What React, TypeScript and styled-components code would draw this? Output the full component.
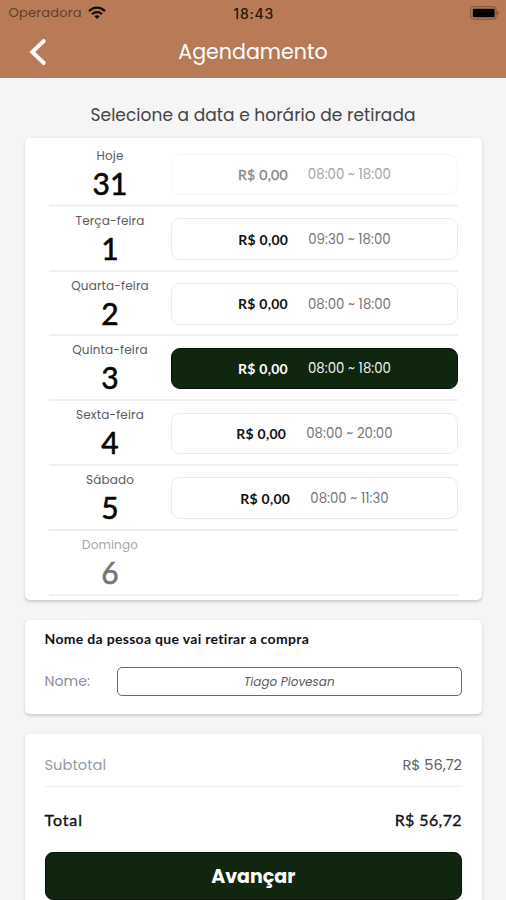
import React from "react";
import styled, { createGlobalStyle, css } from "styled-components";

const GlobalStyle = createGlobalStyle`
  *, *::before, *::after { box-sizing: border-box; }
  html, body { margin: 0; padding: 0; }
  body { background: #f5f5f5; overflow: hidden; }
`;

const geometric = `Poppins, Inter, "Open Sans", sans-serif`;
const humanist = `Lato, "Open Sans", sans-serif`;

type TextProps = {
  $size: number;
  $weight?: number;
  $track?: number;
  $color?: string;
  $thicken?: number;
};

const textStyle = css<TextProps>`
  font-size: ${(p) => p.$size}px;
  font-weight: ${(p) => p.$weight ?? 400};
  letter-spacing: ${(p) => p.$track ?? 0}px;
  color: ${(p) => p.$color ?? "#111"};
  -webkit-text-stroke: ${(p) => p.$thicken ?? 0}px currentColor;
  white-space: nowrap;
`;

const Geo = styled.span<TextProps>`
  font-family: ${geometric};
  ${textStyle}
`;

const Hum = styled.span<TextProps>`
  font-family: ${humanist};
  ${textStyle}
`;

const Clock = styled.span<TextProps>`
  font-family: Inter, "Liberation Sans", sans-serif;
  ${textStyle}
`;

const Screen = styled.main`
  display: flex;
  flex-direction: column;
  width: 506px;
  height: 900px;
  overflow: hidden;
  background: #f5f5f5;
  font-family: ${geometric};
`;

const Header = styled.header`
  flex: none;
  height: 78px;
  background: #b97b57;
  border-bottom: 1px solid #b47550;
`;

const StatusBar = styled.div`
  display: grid;
  grid-template-columns: 1fr auto 1fr;
  align-items: center;
  height: 26px;
  padding: 0 7px 0 8.5px;
`;

const Carrier = styled.div`
  display: flex;
  align-items: center;
  gap: 6px;
`;

const BatteryIcon = styled.svg`
  justify-self: end;
`;

const NavBar = styled.div`
  display: grid;
  grid-template-columns: 60px 1fr 60px;
  align-items: center;
  height: 51px;
  text-align: center;
`;

const BackButton = styled.button`
  display: flex;
  padding: 0 0 0 28px;
  border: 0;
  background: none;
`;

const Heading = styled.h2`
  flex: none;
  margin: 0;
  height: 59.5px;
  padding-top: 13px;
  line-height: 44px;
  text-align: center;
  font-weight: 400;
`;

const Card = styled.section<{ $height: number }>`
  flex: none;
  height: ${(p) => p.$height}px;
  margin: 0 24px 19.5px 25px;
  border-radius: 5px;
  background: #fff;
  box-shadow: 0 1.5px 3px rgba(0, 0, 0, 0.17);
`;

const DayList = styled(Card)`
  padding: 4.5px 24px 0;
`;

const DayRow = styled.div<{ $strong?: boolean }>`
  display: grid;
  grid-template-columns: 122px 1fr;
  height: 64.8px;
  border-bottom: ${(p) => (p.$strong ? 3 : 2)}px solid ${(p) => (p.$strong ? "#f4f4f4" : "#efeff0")};
`;

const DayLabel = styled.div<{ $muted?: boolean }>`
  display: flex;
  flex-direction: column;
  align-items: center;
  padding-top: 6px;
  line-height: 16px;
  opacity: ${(p) => (p.$muted ? 0.55 : 1)};
`;

const DayNumber = styled(Hum)`
  line-height: 39px;
`;

const Slot = styled.button<{ $selected?: boolean; $muted?: boolean }>`
  display: flex;
  align-items: center;
  justify-content: center;
  gap: 20px;
  height: 41.5px;
  margin: 11.5px 0 0;
  padding: 0;
  border: 1.5px solid ${(p) => (p.$selected ? "#06130a" : p.$muted ? "#f6f6f6" : "#ebebec")};
  border-radius: 9px;
  background: ${(p) => (p.$selected ? "#11260e" : "#fff")};
`;

const SlotHours = styled(Geo)`
  padding-top: 1.5px;
`;

const PersonCard = styled(Card)`
  padding: 8.5px 20px 0 19.5px;
`;

const PersonTitle = styled.div`
  height: 22px;
  line-height: 22px;
`;

const Field = styled.label`
  display: grid;
  grid-template-columns: 72px 1fr;
  align-items: center;
  margin-top: 17px;
`;

const NameInput = styled.div`
  height: 28.5px;
  border: 1px solid #65676a;
  border-radius: 5px;
  line-height: 26px;
  text-align: center;
  font-style: italic;
`;

const TotalsCard = styled(Card)`
  padding: 8px 20px 0 19.5px;
`;

const TotalsRow = styled.div<{ $line?: boolean; $height: number; $drop: number }>`
  display: flex;
  align-items: center;
  justify-content: space-between;
  height: ${(p) => p.$height}px;
  padding-top: ${(p) => p.$drop}px;
  border-bottom: ${(p) => (p.$line ? "1.5px solid #ebedf2" : "0")};
`;

const PrimaryButton = styled.button`
  display: block;
  width: 100%;
  height: 48px;
  padding: 2px 0 0;
  border: 1px solid #06130a;
  border-radius: 8px;
  background: #11260e;
`;

type Day = {
  name: string;
  day: string;
  hours?: string;
  state?: "selected" | "muted";
};

const days: Day[] = [
  { name: "Hoje", day: "31", hours: "08:00 ~ 18:00", state: "muted" },
  { name: "Terça-feira", day: "1", hours: "09:30 ~ 18:00" },
  { name: "Quarta-feira", day: "2", hours: "08:00 ~ 18:00" },
  { name: "Quinta-feira", day: "3", hours: "08:00 ~ 18:00", state: "selected" },
  { name: "Sexta-feira", day: "4", hours: "08:00 ~ 20:00" },
  { name: "Sábado", day: "5", hours: "08:00 ~ 11:30" },
  { name: "Domingo", day: "6", state: "muted" },
];

function DayEntry({ item, first }: { item: Day; first: boolean }) {
  const selected = item.state === "selected";
  const muted = item.state === "muted";
  return (
    <DayRow $strong={first}>
      <DayLabel $muted={muted && !item.hours}>
        <Geo $size={12} $track={0.15} $color="#5a5a5c">{item.name}</Geo>
        <DayNumber $size={30} $thicken={0.6} $color="#050505">{item.day}</DayNumber>
      </DayLabel>
      {item.hours && (
        <Slot $selected={selected} $muted={muted}>
          <Hum
            $size={14}
            $weight={muted ? 400 : 700}
            $thicken={muted ? 0.35 : 0}
            $track={0.25}
            $color={selected ? "#fff" : muted ? "#858789" : "#111"}
          >
            R$ 0,00
          </Hum>
          <SlotHours
            $size={13.3}
            $track={0.05}
            $color={selected ? "#f5f5f5" : muted ? "#a4a4a6" : "#747476"}
          >
            {item.hours}
          </SlotHours>
        </Slot>
      )}
    </DayRow>
  );
}

export default function App() {
  return (
    <>
      <GlobalStyle />
      <Screen>
        <Header>
          <StatusBar>
            <Carrier>
              <Geo $size={13} $track={0.2} $color="#5d3e2b">Operadora</Geo>
              <svg width="18" height="14" viewBox="0 0 18 14" fill="none" stroke="#100a07" strokeWidth="2.3">
                <path d="M1 5.1C5.6.5 12.4.5 17 5.1" />
                <path d="M4 8.2c2.8-2.7 7.2-2.7 10 0" />
                <path d="M6.4 10.2c1.5-1.3 3.7-1.3 5.2 0L9 13z" fill="#100a07" stroke="none" />
              </svg>
            </Carrier>
            <Clock $size={14} $weight={500} $track={0.8} $color="#24150d">18:43</Clock>
            <BatteryIcon width="29" height="14" viewBox="0 0 29 14">
              <rect x="0.7" y="0.7" width="25.4" height="12.6" rx="3" fill="none" stroke="#8b583b" strokeWidth="1.2" />
              <rect x="2.8" y="2.8" width="21.8" height="8.4" rx="1" fill="#050302" />
              <path d="M27.2 4.8c1.8.8 1.8 3.6 0 4.4z" fill="#704329" />
            </BatteryIcon>
          </StatusBar>
          <NavBar>
            <BackButton aria-label="Voltar">
              <svg width="20" height="28" viewBox="0 0 20 28" fill="none" stroke="#fff" strokeWidth="3.8" strokeLinecap="round">
                <path d="M15.8 3L4.2 14l11.6 11" />
              </svg>
            </BackButton>
            <Geo $size={20.6} $color="#fff">Agendamento</Geo>
          </NavBar>
        </Header>

        <Heading>
          <Geo $size={17} $track={0.05} $color="#444">Selecione a data e horário de retirada</Geo>
        </Heading>

        <DayList $height={462.5}>
          {days.map((item, i) => (
            <DayEntry key={item.name} item={item} first={i === 0} />
          ))}
        </DayList>

        <PersonCard $height={94.5}>
          <PersonTitle>
            <Hum $size={14} $weight={700} $track={0.31}>Nome da pessoa que vai retirar a compra</Hum>
          </PersonTitle>
          <Field>
            <Geo $size={14.2} $color="#868d9a">Nome:</Geo>
            <NameInput>
              <Geo $size={12} $color="#5c5c5e">Tiago Piovesan</Geo>
            </NameInput>
          </Field>
        </PersonCard>

        <TotalsCard $height={200}>
          <TotalsRow $height={45} $drop={3.5} $line>
            <Geo $size={14.7} $color="#959aab">Subtotal</Geo>
            <Geo $size={14.6} $color="#606062">R$ 56,72</Geo>
          </TotalsRow>
          <TotalsRow $height={65} $drop={1.5}>
            <Hum $size={16} $track={0.9} $thicken={0.35}>Total</Hum>
            <Hum $size={16} $track={0.4} $thicken={0.35}>R$ 56,72</Hum>
          </TotalsRow>
          <PrimaryButton>
            <Geo $size={19} $weight={700} $color="#fff">Avançar</Geo>
          </PrimaryButton>
        </TotalsCard>
      </Screen>
    </>
  );
}
